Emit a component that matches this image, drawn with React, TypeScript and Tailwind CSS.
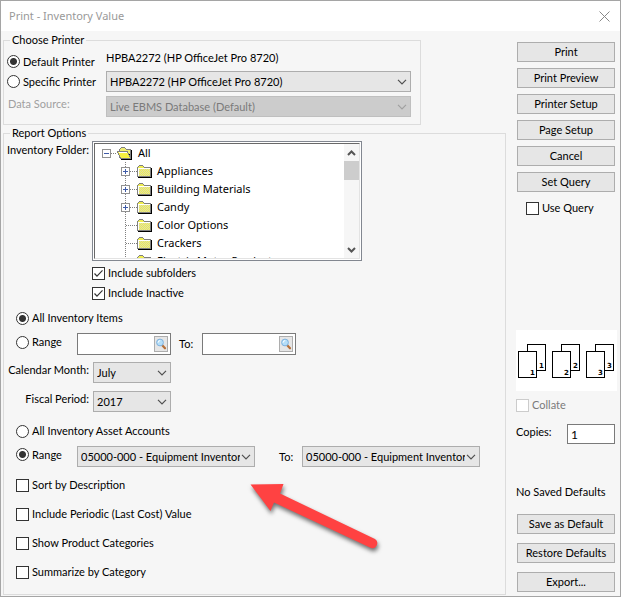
import { useState } from 'react';
import type { ReactNode } from 'react';

type Folder = {
  name: string;
  expandable: boolean;
};

const folders: Folder[] = [
  { name: 'Appliances', expandable: true },
  { name: 'Building Materials', expandable: true },
  { name: 'Candy', expandable: true },
  { name: 'Color Options', expandable: false },
  { name: 'Crackers', expandable: false },
  { name: 'Electric Motor Products', expandable: false },
];

const printActions = ['Print', 'Print Preview', 'Printer Setup', 'Page Setup', 'Cancel', 'Set Query'];

const PushButton = ({ children }: { children: ReactNode }) => (
  <button type="button" className="h-5 w-full border border-[#adadad] bg-[#e6e6e6] text-center leading-4">
    {children}
  </button>
);

type CheckProps = {
  label: string;
  defaultChecked?: boolean;
  disabled?: boolean;
};

const CheckBox = ({ label, defaultChecked, disabled }: CheckProps) => {
  const [checked, setChecked] = useState(!!defaultChecked);

  return (
    <label className={`flex items-center gap-[3px] ${disabled ? 'text-[#7a7a7a]' : ''}`}>
      <span className="relative flex size-[13px] shrink-0">
        <input
          type="checkbox"
          checked={checked}
          disabled={disabled}
          onChange={() => setChecked(!checked)}
          className="size-[13px] appearance-none border border-[#333333] bg-white disabled:border-[#cccccc]"
        />
        {checked && (
          <svg viewBox="0 0 13 13" className="pointer-events-none absolute inset-0 size-[13px]" aria-hidden="true">
            <path d="M2.5 6.5 5 9.2 10.5 3.4" fill="none" stroke="#333" strokeWidth="1.2" />
          </svg>
        )}
      </span>
      {label}
    </label>
  );
};

type RadioProps = {
  name: string;
  label: string;
  defaultChecked?: boolean;
};

const Radio = ({ name, label, defaultChecked }: RadioProps) => (
  <label className="flex items-center gap-[3px]">
    <input
      type="radio"
      name={name}
      defaultChecked={defaultChecked}
      className="size-[13px] shrink-0 appearance-none rounded-full border border-[#333333] bg-white checked:bg-[radial-gradient(circle,#333333_3px,#ffffff_4px)]"
    />
    {label}
  </label>
);

type DropDownProps = {
  id?: string;
  label?: string;
  value: string;
  className: string;
  disabled?: boolean;
};

const DropDown = ({ id, label, value, className, disabled }: DropDownProps) => (
  <div className={`relative h-[21px] ${className}`}>
    <select
      id={id}
      aria-label={label}
      disabled={disabled}
      className="block h-full w-full appearance-none border border-[#adadad] bg-[#e6e6e6] pr-[14px] pl-[3px] disabled:border-[#bfbfbf] disabled:bg-[#cccccc] disabled:text-[#7a7a7a] disabled:opacity-100"
    >
      <option>{value}</option>
    </select>
    <svg viewBox="0 0 10 6" className="pointer-events-none absolute top-2 right-1 h-[6px] w-[10px]" aria-hidden="true">
      <path d="M1 .8 5 4.8 9 .8" fill="none" stroke={disabled ? '#a0a0a0' : '#505050'} strokeWidth="1.2" />
    </svg>
  </div>
);

const LookupField = ({ label }: { label: string }) => (
  <div className="flex h-[22px] w-[94px] border border-[#7a7a7a] bg-white">
    <input type="text" aria-label={label} className="min-w-0 flex-1 px-1 outline-none" />
    <button type="button" aria-label="Look up" className="my-[2px] mr-[2px] flex h-4 w-[14px] items-center justify-center border border-[#adadad] bg-[#e6e6e6]">
      <svg viewBox="0 0 12 12" className="size-3 shrink-0" aria-hidden="true">
        <path d="M7 7 10 10.300" stroke="#b5703a" strokeWidth="2.2" strokeLinecap="round" />
        <circle cx="5" cy="4.500" r="3.400" fill="#b5def8" stroke="#7fb2de" />
        <path d="M3.200 4.600A2 2 0 0 1 5.200 2.600" fill="none" stroke="#fff" />
      </svg>
    </button>
  </div>
);

const FolderIcon = ({ open }: { open?: boolean }) => (
  <svg viewBox="0 0 16 13" className="h-[13px] w-4 shrink-0" shapeRendering="crispEdges" aria-hidden="true">
    {open ? (
      <>
        <path d="M2.5 11V2.5L4.5 .5H7.5L9.5 2.5H13.5V11" fill="#f0ee70" stroke="#808080" />
        <path d="M12 5 14 11V3H15V13H4V12H12Z" fill="#000" />
        <path d="M.5 4.5H10.5L13.5 11.5H3.5Z" fill="#f6f040" stroke="#808080" />
        <path d="M2 5.5H10" stroke="#fff" />
      </>
    ) : (
      <>
        <path d="M.5 11.5V2.5L2.500 .5H5.5L7.5 2.5H13.5V11.5Z" fill="#f0ee50" stroke="#808080" />
        <path d="M2 5.5H13M2 7.5H13M2 9.5H13" stroke="#dcdcb0" strokeDasharray="1 1" />
        <path d="M3 4.5H13M3 6.5H13M3 8.5H13M3 10.5H13" stroke="#dcdcb0" strokeDasharray="1 1" />
        <path d="M1.5 11V3.5H13" fill="none" stroke="#fff" />
        <path d="M14.5 3V12.5H1" fill="none" stroke="#000" />
      </>
    )}
  </svg>
);

const Expander = ({ open }: { open?: boolean }) => (
  <g>
    <rect x=".5" y="5.5" width="8" height="8" fill="#fff" stroke="#919191" />
    <path d={open ? 'M2 9.5H7' : 'M2 9.5H7M4.5 7V12'} stroke="#3f5ca8" />
  </g>
);

const FolderTree = () => (
  <div className="h-[120px] w-[270px] border border-[#828790] bg-white p-px">
    <div className="flex h-full border-t border-r border-b border-l border-[#e3e3e3] border-t-[#696969] border-l-[#696969]">
      <ul className="min-w-0 flex-1 overflow-hidden font-['Noto_Sans','Open_Sans',sans-serif] text-[11px]">
        <li>
          <div className="flex h-[18px] items-center pl-[7px]">
            <svg viewBox="0 0 15 18" className="h-[18px] w-[15px] shrink-0" shapeRendering="crispEdges" aria-hidden="true">
              <path d="M9 9.5H15" stroke="#808080" strokeDasharray="1 1" />
              <Expander open />
            </svg>
            <FolderIcon open />
            <span className="pl-[5px]">All</span>
          </div>
          <ul>
            {folders.map((folder) => (
              <li key={folder.name} className="flex h-[18px] items-center pl-[26px] whitespace-nowrap">
                <svg viewBox="0 0 16 18" className="h-[18px] w-4 shrink-0" shapeRendering="crispEdges" aria-hidden="true">
                  <path d="M4.5 0V18M5 9.5H16" stroke="#808080" strokeDasharray="1 1" />
                  {folder.expandable && <Expander />}
                </svg>
                <FolderIcon />
                <span className="pl-1">{folder.name}</span>
              </li>
            ))}
          </ul>
        </li>
      </ul>
      <div className="flex w-[15px] flex-col items-center bg-[#f6f6f6]" aria-hidden="true">
        <svg viewBox="0 0 15 17" className="h-[17px] w-[15px]">
          <path d="M4 11 7.5 7.5 11 11" fill="none" stroke="#555" strokeWidth="2" />
        </svg>
        <div className="h-[19px] w-full bg-[#cdcdcd]" />
        <svg viewBox="0 0 15 17" className="mt-auto h-[17px] w-[15px]">
          <path d="M4 7 7.5 10.5 11 7" fill="none" stroke="#555" strokeWidth="2" />
        </svg>
      </div>
    </div>
  </div>
);

// Three pairs of overlapping sheets, numbered front and back
const CollatePreview = () => (
  <svg viewBox="0 0 101 61" className="h-[61px] w-[101px] bg-white" role="img" aria-label="Uncollated copies">
    {[1, 2, 3].map((n) => (
      <g key={n} transform={`translate(${(n - 1) * 34} 0)`} fill="#fff" stroke="#000">
        <rect x="11.5" y="14.5" width="18" height="26" />
        <rect x="2.5" y="21.5" width="18" height="26" />
        <text x="23" y="38" fill="#000" stroke="none" className="font-['DejaVu_Sans',sans-serif] text-[7px] font-bold">{n}</text>
        <text x="14" y="45" fill="#000" stroke="none" className="font-['DejaVu_Sans',sans-serif] text-[7px] font-bold">{n}</text>
      </g>
    ))}
  </svg>
);

const ChoosePrinter = () => (
  <fieldset className="mr-[85px] border border-[#dcdcdc] pb-[7px] pl-[3px]">
    <legend className="ml-[3px] px-[2px] leading-4">Choose Printer</legend>
    <div className="flex h-[23px] pt-1">
      <div className="flex w-[99px]">
        <Radio name="printer" label="Default Printer" defaultChecked />
      </div>
      <span className="leading-3">HPBA2272 (HP OfficeJet Pro 8720)</span>
    </div>
    <div className="flex">
      <div className="flex w-[99px]">
        <Radio name="printer" label="Specific Printer" />
      </div>
      <DropDown label="Printer" value="HPBA2272 (HP OfficeJet Pro 8720)" className="mr-[9px] flex-1" />
    </div>
    <div className="mt-1 flex">
      <label htmlFor="source" className="w-[99px] pl-px leading-4 text-[#a0a0a0]">Data Source:</label>
      <DropDown id="source" value="Live EBMS Database (Default)" className="mr-[9px] flex-1" disabled />
    </div>
  </fieldset>
);

const ReportOptions = () => (
  <fieldset className="min-w-0 border border-[#dcdcdc] pb-[14px]">
    <legend className="ml-[6px] px-[2px] leading-4">Report Options</legend>
    <div className="flex">
      <span className="w-[85px] pt-px text-right leading-4">Inventory Folder:</span>
      <div className="ml-[3px]">
        <FolderTree />
        <div className="mt-[2px] flex flex-col">
          <div className="flex h-5"><CheckBox label="Include subfolders" defaultChecked /></div>
          <div className="flex h-5"><CheckBox label="Include Inactive" defaultChecked /></div>
        </div>
      </div>
    </div>
    <div className="mt-1 flex h-[22px] pl-3">
      <Radio name="items" label="All Inventory Items" defaultChecked />
    </div>
    <div className="mt-1 flex items-center pl-3">
      <div className="w-[61px] pb-1"><Radio name="items" label="Range" /></div>
      <LookupField label="First item" />
      <span className="w-[31px] pl-2">To:</span>
      <LookupField label="Last item" />
    </div>
    <div className="mt-[7px] flex">
      <label htmlFor="month" className="w-[85px] text-right leading-4">Calendar Month:</label>
      <DropDown id="month" value="July" className="ml-1 w-[78px]" />
    </div>
    <div className="mt-2 flex">
      <label htmlFor="period" className="w-[85px] text-right leading-4">Fiscal Period:</label>
      <DropDown id="period" value="2017" className="ml-1 w-[78px]" />
    </div>
    <div className="mt-2 flex h-[22px] pl-3">
      <Radio name="accounts" label="All Inventory Asset Accounts" />
    </div>
    <div className="mt-1 flex items-center pl-3">
      <div className="w-[61px] pb-1"><Radio name="accounts" label="Range" defaultChecked /></div>
      <DropDown label="First account" value="05000-000 - Equipment Inventory" className="w-[178px]" />
      <span className="w-[47px] pl-6">To:</span>
      <DropDown label="Last account" value="05000-000 - Equipment Inventory" className="w-[178px]" />
    </div>
    <div className="mt-[10px] flex flex-col gap-[13px] pl-3">
      <CheckBox label="Sort by Description" />
      <CheckBox label="Include Periodic (Last Cost) Value" />
      <CheckBox label="Show Product Categories" />
      <CheckBox label="Summarize by Category" />
    </div>
  </fieldset>
);

const SidePanel = () => (
  <div className="flex w-[114px] flex-col pt-[10px] pr-[5px] pb-1 pl-[10px]">
    <div className="flex flex-col gap-[6px] pl-px">
      {printActions.map((action) => (
        <PushButton key={action}>{action}</PushButton>
      ))}
    </div>
    <div className="mt-2 pl-[10px]">
      <CheckBox label="Use Query" />
    </div>
    <div className="mt-auto">
      <CollatePreview />
    </div>
    <div className="mt-[6px]">
      <CheckBox label="Collate" disabled />
    </div>
    <div className="mt-[11px] flex">
      <label htmlFor="copies" className="w-[51px] leading-4">Copies:</label>
      <input id="copies" type="text" defaultValue="1" className="h-5 min-w-0 flex-1 border border-[#7a7a7a] bg-white px-[3px] text-[12px] outline-none" />
    </div>
    <p className="mt-10 leading-4">No Saved Defaults</p>
    <div className="mt-[14px] flex flex-col gap-[9px] pl-px">
      <PushButton>Save as Default</PushButton>
      <PushButton>Restore Defaults</PushButton>
      <PushButton>Export...</PushButton>
    </div>
  </div>
);

const App = () => (
  <div className="relative flex min-h-screen flex-col border border-[#a5a5a5] bg-[#f6f6f6] font-['Lato','Liberation_Sans',sans-serif] text-[11px] leading-4 text-black">
    <header className="flex h-[30px] items-center justify-between bg-white pr-[10px] pl-2">
      <h1 className="font-['Noto_Sans','Open_Sans',sans-serif] text-[11px] text-[#999999]">Print - Inventory Value</h1>
      <button type="button" aria-label="Close">
        <svg viewBox="0 0 11 11" className="size-[11px]" aria-hidden="true">
          <path d="M.5 .5 10.5 10.5M10.5 .5 .5 10.5" stroke="#888" />
        </svg>
      </button>
    </header>
    <form className="flex flex-1 pt-px pl-[2px]">
      <div className="min-w-0 flex-1">
        <ChoosePrinter />
        <ReportOptions />
      </div>
      <SidePanel />
    </form>
    {/* callout pointing at the account range */}
    <svg viewBox="0 0 140 80" className="pointer-events-none absolute top-[478px] left-[245px] h-20 w-[140px]" aria-hidden="true">
      <g fill="#ff4242" className="drop-shadow-[1px_3px_2px_rgba(0,0,0,0.55)]">
        <path d="M4.500 5.500 37.500 5 34 14.500 129 60A5 5 0 0 1 125 69L28 23.500 24.500 32Z" />
      </g>
    </svg>
  </div>
);

export default App;
